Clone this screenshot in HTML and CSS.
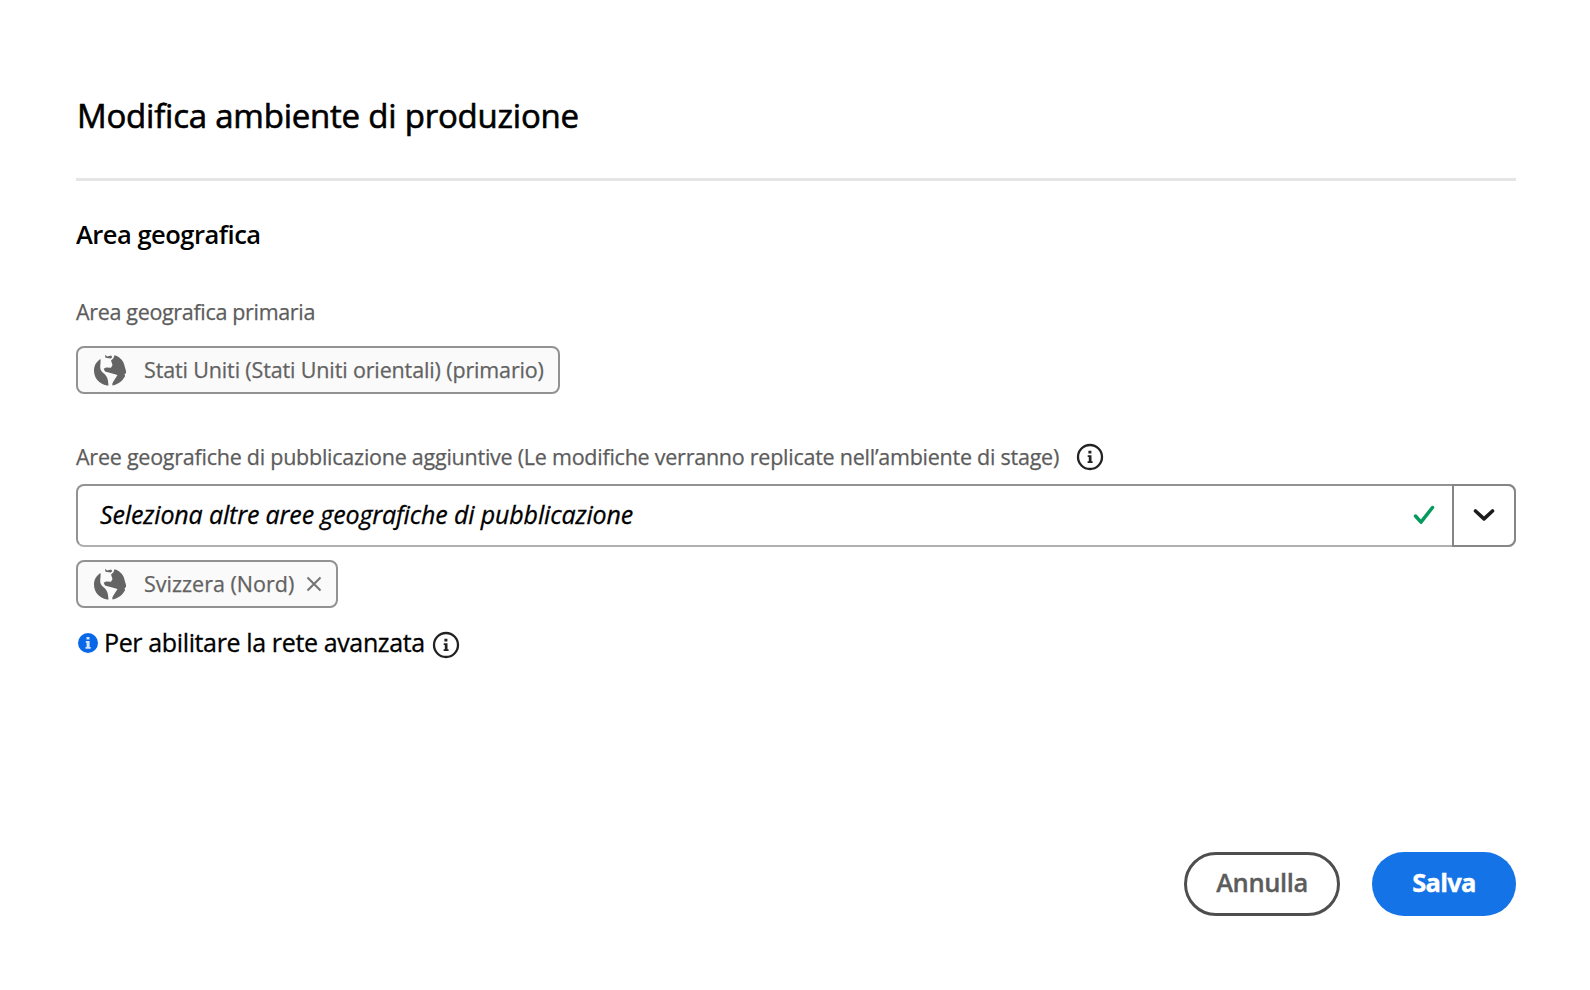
FILE: index.html
```html
<!DOCTYPE html>
<html lang="it">
<head>
<meta charset="utf-8">
<title>Modifica ambiente di produzione</title>
<link rel="stylesheet" href="styles.css">
</head>
<body>
<svg class="defs" width="0" height="0">
  <symbol id="globe" viewBox="0 0 34 34">
    <path d="M7.500 6C3.500 8.500 1 12.500 1 17.500c0 7.500 5 13.500 13 15h1.500c-.4-3.500-.3-6.500-2.300-9.500-1.700-2.500-4.200-3.500-5.400-6-1.300-3 .2-7.500-.3-11z"/>
    <path d="M12 1.800l2.200 1.600 4-.9 1 1.700-1.500 1.300-5.200-.7z"/>
    <path d="M21.500 2.200C26 3.500 30 7 31 11l2 7c.4 1.600-.2 2.800-1.500 3.200l.6 1.800c-2.500 5-7 8.500-12.500 9.500l-.4-1.500c1.200-3 3.200-5.500 5.300-9l-3.500-1-9-2.500-1.300-2.700 2.300-1.300 5 .3 1.500-2.800-1.500-4.500 2.300-2z"/>
  </symbol>
  <symbol id="info" viewBox="0 0 28 28">
    <circle cx="14" cy="14" r="12" fill="none" stroke="currentColor" stroke-width="2.300"/>
    <path d="M12.400 7.700h3v2.700h-3zM11.700 12.200h3.800v6h1.100v1.800h-5v-1.800h1.200v-4.200h-1.100z"/>
  </symbol>
</svg>
<main class="dialog">
  <h1 class="title">Modifica ambiente di produzione</h1>
  <hr class="rule">
  <h2 class="section">Area geografica</h2>
  <div class="label label-primary">Area geografica primaria</div>
  <div class="tag tag-primary">
    <svg class="globe"><use href="#globe"/></svg>
    <span class="tag-long">Stati Uniti (Stati Uniti orientali) (primario)</span>
  </div>
  <div class="label-row">
    <span class="label label-extra">Aree geografiche di pubblicazione aggiuntive (Le modifiche verranno replicate nell’ambiente di stage)</span>
    <svg class="info"><use href="#info"/></svg>
  </div>
  <div class="combo">
    <span class="placeholder">Seleziona altre aree geografiche di pubblicazione</span>
    <svg class="check" viewBox="0 0 22 20"><path d="M2.500 11l5.500 6.200L19.500 2.500"/></svg>
    <button class="toggle" aria-label="Apri"><svg class="chevron" viewBox="0 0 22 14"><path d="M2.500 3l8.500 7.800L19.500 3"/></svg></button>
  </div>
  <div class="tag tag-extra">
    <svg class="globe"><use href="#globe"/></svg>
    <span>Svizzera (Nord)</span>
    <svg class="close" viewBox="0 0 16 16"><path d="M1.500 1.500l13 13M14.500 1.500l-13 13"/></svg>
  </div>
  <div class="note">
    <svg class="info-solid" viewBox="0 0 20 20"><circle cx="10" cy="10" r="10"/><path d="M8.500 4h3v2.500h-3zM7.800 8h3.800v6h1.100v1.800H7.500V14h1.100V9.800h-.8z"/></svg>
    <span class="note-text">Per abilitare la rete avanzata</span>
    <svg class="info note-info"><use href="#info"/></svg>
  </div>
  <div class="actions">
    <button class="btn cancel">Annulla</button>
    <button class="btn save">Salva</button>
  </div>
</main>
</body>
</html>
```

FILE: styles.css
```css
* { box-sizing: border-box; }
body {
  margin: 0;
  background: #fff;
  color: #000;
  font-family: "Open Sans", "Noto Sans", sans-serif;
}
svg { display: block; flex: none; }
.defs { position: absolute; }
.dialog {
  display: flex;
  flex-direction: column;
  align-items: flex-start;
  height: 990px;
  padding: 92px 74px 0 76px;
  white-space: nowrap;
}
.title {
  margin: 0 0 0 1px;
  font-size: 33px;
  line-height: 48px;
  font-weight: 500;
  letter-spacing: -0.22px;
  -webkit-text-stroke: 0.6px #000;
}
.rule {
  width: 100%;
  height: 3px;
  margin: 38px 0 35px;
  border: 0;
  background: #e5e5e5;
}
.section {
  margin: 0;
  font-size: 25.5px;
  line-height: 36px;
  font-weight: 600;
  letter-spacing: -0.5px;
}
.label {
  font-size: 21.5px;
  line-height: 30px;
  color: #5c5c5c;
  -webkit-text-stroke: 0.25px #5c5c5c;
}
.label-primary { margin-top: 45px; letter-spacing: -0.33px; }
.label-extra { letter-spacing: -0.245px; }
.tag {
  display: flex;
  align-items: center;
  height: 48px;
  padding: 0 14px 0 15px;
  border: 2px solid #929292;
  border-radius: 8px;
  background: #fafafa;
  color: #626262;
  font-size: 21.5px;
  line-height: 30px;
  -webkit-text-stroke: 0.25px #626262;
}
.tag-primary { width: 484px; margin-top: 19px; }
.tag-long { letter-spacing: -0.14px; }
.tag-extra { width: 262px; margin-top: 13px; }
.globe { width: 34px; height: 34px; margin: 0 17px 1px 0; fill: #646464; }
.close {
  width: 16px;
  height: 16px;
  margin-left: auto;
  fill: none;
  stroke: #747474;
  stroke-width: 2;
}
.label-row { display: flex; align-items: center; gap: 17px; margin-top: 48px; }
.info { width: 28px; height: 28px; color: #222; fill: #222; }
.combo {
  display: flex;
  align-items: center;
  width: 100%;
  height: 63px;
  margin-top: 12px;
  border: 2px solid #929292;
  border-bottom-color: #b0b0b0;
  border-radius: 8px;
}
.placeholder {
  margin-left: 22px;
  padding-bottom: 3px;
  font-size: 25px;
  font-style: italic;
  letter-spacing: -0.14px;
  -webkit-text-stroke: 0.3px #000;
}
.check {
  width: 22px;
  height: 20px;
  margin: 0 17px 2px auto;
  fill: none;
  stroke: #079a5d;
  stroke-width: 3.5;
  stroke-linecap: round;
  stroke-linejoin: round;
}
.toggle {
  display: flex;
  align-items: center;
  justify-content: center;
  width: 64px;
  height: 63px;
  margin: 0 -2px 0 0;
  padding: 0 1px 1px 0;
  border: 2px solid #868686;
  border-radius: 0 8px 8px 0;
  background: #fff;
}
.chevron {
  width: 22px;
  height: 14px;
  fill: none;
  stroke: #1c1c1c;
  stroke-width: 3.6;
  stroke-linecap: round;
  stroke-linejoin: round;
}
.note { display: flex; align-items: center; margin: 20px 0 0 2px; height: 30px; }
.info-solid { width: 20px; height: 20px; }
.info-solid circle { fill: #0868e8; }
.info-solid path { fill: #d5e5fb; }
.note-text {
  margin: 0 0 2px 6px;
  font-size: 25px;
  line-height: 30px;
  letter-spacing: -0.37px;
  -webkit-text-stroke: 0.3px #000;
}
.note-info { margin: 4px 0 0 7px; }
.actions { display: flex; gap: 32px; align-self: flex-end; margin-top: 194px; }
.btn {
  height: 64px;
  border-radius: 32px;
  padding: 0 0 5px;
  font-family: inherit;
  font-size: 25.5px;
}
.cancel {
  width: 156px;
  border: 3px solid #4e4e4e;
  background: #fff;
  color: #5c5c5c;
  font-weight: 600;
  letter-spacing: -0.4px;
  -webkit-text-stroke: 0.3px #5c5c5c;
}
.save {
  width: 144px;
  border: 0;
  background: #1473e6;
  color: #fff;
  font-weight: 700;
  letter-spacing: -0.7px;
  -webkit-text-stroke: 0.4px #fff;
}
```
